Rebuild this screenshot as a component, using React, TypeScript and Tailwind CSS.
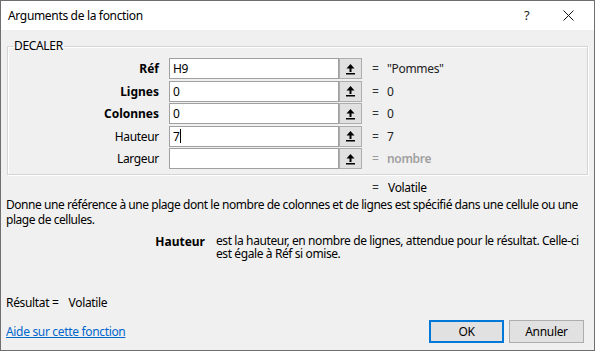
import React from 'react';

const font = { fontFamily: '"Noto Sans", "Segoe UI", sans-serif' };

function RefIcon() {
  return (
    <svg width="11" height="12" viewBox="0 0 11 12">
      <path d="M5.5 1 L9.5 5.5 L6.5 5.5 L6.5 9 L4.5 9 L4.5 5.5 L1.5 5.5 Z" fill="#000" />
      <rect x="1" y="10" width="9" height="1.5" fill="#000" />
    </svg>
  );
}

type Arg = { label: string; value: string; result: string; bold: boolean; empty?: boolean; caret?: boolean };

const args: Arg[] = [
  { label: 'Réf', value: 'H9', result: '"Pommes"', bold: true },
  { label: 'Lignes', value: '0', result: '0', bold: true },
  { label: 'Colonnes', value: '0', result: '0', bold: true },
  { label: 'Hauteur', value: '7', result: '7', bold: false, caret: true },
  { label: 'Largeur', value: '', result: 'nombre', bold: false, empty: true },
];

function ArgRow({ a }: { a: Arg }) {
  return (
    <div className="flex items-center h-[21px]">
      <div className={`w-[151px] text-right ${a.bold ? 'font-bold tracking-normal' : ''}`}>{a.label}</div>
      <div className="ml-[10px] w-[170px] h-[21px] border border-[#a0a0a0] bg-white flex items-center pl-[3px]">
        {a.value}
        {a.caret && <span className="inline-block w-px h-[14px] bg-black" />}
      </div>
      <div className="w-[23px] h-[21px] border border-[#adadad] bg-[#e1e1e1] flex items-center justify-center">
        <RefIcon />
      </div>
      <div className={`ml-[10px] w-[15px] ${a.empty ? 'text-[#9a9a9a]' : 'text-[#333]'}`}>=</div>
      <div className={a.empty ? 'text-[#a0a0a0] font-semibold' : 'text-[#222]'}>{a.result}</div>
    </div>
  );
}

export default function App() {
  return (
    <div
      className="w-[595px] h-[351px] border border-[#6f6f6f] bg-[#f0f0f0] flex flex-col text-[12px] leading-[15px] tracking-[-0.33px] text-black overflow-hidden"
      style={font}
    >
      <div className="h-[29px] bg-white flex items-center pl-[7px] shrink-0">
        <span className="flex-1 text-[12px]">Arguments de la fonction</span>
        <span className="w-[10px] text-[13px] text-[#222] mr-[29px]">?</span>
        <svg width="11" height="11" viewBox="0 0 11 11" className="mr-[20px]">
          <path d="M0.5 0.5 L10.5 10.5 M10.5 0.5 L0.5 10.5" stroke="#111" strokeWidth="1" />
        </svg>
      </div>

      <fieldset className="mx-[6px] mt-[8px] h-[137px] border border-[#d5d5d5] shadow-[inset_1px_1px_0_#ffffff,1px_1px_0_#ffffff] px-0">
        <legend className="ml-[5px] px-[1px] leading-[16px]">DECALER</legend>
        <div className="flex flex-col gap-[1.5px] pt-[4px]">
          {args.map(a => (
            <ArgRow key={a.label} a={a} />
          ))}
        </div>
      </fieldset>

      <div className="flex mt-[5px] h-[15px]">
        <span className="ml-[371px] w-[16px] text-[#333]">=</span>
        <span>Volatile</span>
      </div>
      <p className="pl-[5px] mt-[2px] leading-[15px] tracking-[-0.45px]">
        Donne une référence à une plage dont le nombre de colonnes et de lignes est spécifié dans une cellule ou une plage de cellules.
      </p>
      <div className="flex mt-[7px]">
        <div className="w-[215px] text-right font-bold tracking-normal pr-[11px] shrink-0">Hauteur</div>
        <p className="w-[372px] leading-[13px] tracking-[-0.4px]">
          est la hauteur, en nombre de lignes, attendue pour le résultat. Celle-ci est égale à Réf si omise.
        </p>
      </div>

      <div className="flex-1" />
      <div className="px-[5px] flex gap-[10px]">
        <span>Résultat =</span>
        <span>Volatile</span>
      </div>
      <div className="flex items-center px-[5px] mt-[10px] mb-[7px]">
        <a className="flex-1 text-[#0066cc] underline">Aide sur cette fonction</a>
        <button className="w-[75px] h-[23px] border-2 border-[#0078d7] bg-[#e1e1e1] text-[12px]">OK</button>
        <button className="ml-[5px] mr-[5px] w-[75px] h-[23px] border border-[#adadad] bg-[#e1e1e1] text-[12px]">Annuler</button>
      </div>
    </div>
  );
}
